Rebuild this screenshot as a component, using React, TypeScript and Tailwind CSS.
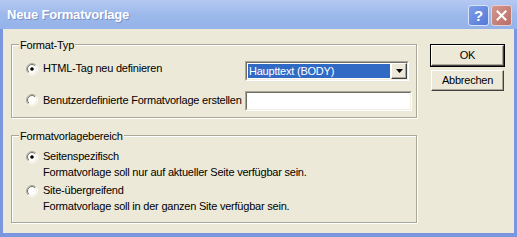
import React from "react";

function Radio({ checked }: { checked?: boolean }) {
  return (
    <svg width="12" height="12" viewBox="0 0 12 12" className="shrink-0">
      <defs>
        <linearGradient id="ro" x1="0" y1="0" x2="1" y2="1">
          <stop offset="0.45" stopColor="#aca899" />
          <stop offset="0.55" stopColor="#ffffff" />
        </linearGradient>
        <linearGradient id="ri" x1="0" y1="0" x2="1" y2="1">
          <stop offset="0.45" stopColor="#716f64" />
          <stop offset="0.55" stopColor="#f1efe2" />
        </linearGradient>
      </defs>
      <circle cx="6" cy="6" r="5.5" fill="none" stroke="url(#ro)" strokeWidth="1" />
      <circle cx="6" cy="6" r="4.5" fill="#ffffff" stroke="url(#ri)" strokeWidth="1" />
      {checked && <circle cx="6" cy="6" r="1.8" fill="#000000" />}
    </svg>
  );
}

function GroupBox({
  label,
  className,
  children,
}: {
  label: string;
  className?: string;
  children: React.ReactNode;
}) {
  return (
    <div
      className={
        "relative border border-[#aca899] shadow-[inset_1px_1px_0_#ffffff,1px_1px_0_#ffffff] " +
        (className ?? "")
      }
    >
      <span className="absolute left-[7px] top-[-6px] bg-[#ece9d8] px-[1px] leading-[13px] whitespace-nowrap">
        {label}
      </span>
      {children}
    </div>
  );
}

function Sunken({ className, children }: { className?: string; children?: React.ReactNode }) {
  return (
    <div
      className={
        "shrink-0 border border-t-[#aca899] border-l-[#aca899] border-b-[#ffffff] border-r-[#ffffff] " +
        (className ?? "")
      }
    >
      <div className="h-full w-full border border-t-[#716f64] border-l-[#716f64] border-b-[#f1efe2] border-r-[#f1efe2] bg-white">
        {children}
      </div>
    </div>
  );
}

function Button({ label, isDefault }: { label: string; isDefault?: boolean }) {
  return (
    <div
      className={
        "h-[23px] w-[75px] " + (isDefault ? "border border-black" : "border border-transparent")
      }
    >
      <div className="flex h-full w-full items-center justify-center border border-t-white border-l-white border-b-[#404040] border-r-[#404040] bg-[#ece9d8] shadow-[inset_-1px_-1px_0_#aca899]">
        <span className="leading-[13px]">{label}</span>
      </div>
    </div>
  );
}

export default function App() {
  return (
    <div
      className="flex h-[237px] w-[517px] flex-col bg-[#7a96df] text-[11px] tracking-[-0.22px] text-black"
      style={{ fontFamily: '"Liberation Sans", Arial, sans-serif' }}
    >
      {/* Title bar */}
      <div className="flex h-[29px] items-start bg-gradient-to-b from-[#b4c9f2] via-[#9db9eb] to-[#95b2ea] pl-[7px] pr-[5px]">
        <span className="mt-[7px] text-[13px] font-bold leading-[15px] tracking-[-0.2px] text-white [text-shadow:1px_1px_0_#7b8fc8]">
          Neue Formatvorlage
        </span>
        <div className="ml-auto mt-[5px] flex gap-[2px]">
          <div className="flex h-[21px] w-[21px] items-center justify-center rounded-[3px] border border-[#d8e2f8] bg-gradient-to-br from-[#7d9fe8] to-[#5578d8]">
            <span className="text-[15px] font-bold leading-[15px] tracking-normal text-white">?</span>
          </div>
          <div className="flex h-[21px] w-[21px] items-center justify-center rounded-[3px] border border-[#e8d0d0] bg-gradient-to-br from-[#d4968e] to-[#b86e66]">
            <svg width="11" height="11" viewBox="0 0 11 11">
              <path d="M1.5 1.5 L9.5 9.5 M9.5 1.5 L1.5 9.5" stroke="#ffffff" strokeWidth="2" strokeLinecap="square" />
            </svg>
          </div>
        </div>
      </div>

      {/* Client */}
      <div className="mx-[3px] mb-[4px] flex flex-1 bg-[#ece9d8] pl-[8px] pt-[15px]">
        <div className="flex w-[406px] shrink-0 flex-col gap-[17px]">
          <GroupBox label="Format-Typ" className="h-[74px]">
            <div className="flex flex-col gap-[10px] pt-[16px]">
              <div className="flex h-[20px] items-start">
                <div className="ml-[14px] mt-[1px] flex items-start gap-[5px] whitespace-nowrap">
                  <div className="mt-[1px]">
                    <Radio checked />
                  </div>
                  <span className="leading-[13px]">HTML-Tag neu definieren</span>
                </div>
                <Sunken className="ml-auto mr-[7px] h-[20px] w-[164px]">
                  <div className="flex h-full items-stretch">
                    <div className="m-[1px] flex flex-1 items-center bg-[#316ac5] pl-[1px] text-white">
                      <span className="leading-[13px]">Haupttext (BODY)</span>
                    </div>
                    <div className="flex w-[16px] items-center justify-center border border-t-white border-l-white border-b-[#404040] border-r-[#404040] bg-[#ece9d8] shadow-[inset_-1px_-1px_0_#aca899]">
                      <svg width="7" height="4" viewBox="0 0 7 4">
                        <path d="M0 0 H7 L3.5 4 Z" fill="#000000" />
                      </svg>
                    </div>
                  </div>
                </Sunken>
              </div>
              <div className="flex h-[20px] items-start">
                <div className="ml-[14px] mt-[3px] flex items-start gap-[5px] whitespace-nowrap">
                  <Radio />
                  <span className="leading-[13px]">Benutzerdefinierte Formatvorlage erstellen</span>
                </div>
                <Sunken className="ml-auto mr-[4px] h-[20px] w-[167px]" />
              </div>
            </div>
          </GroupBox>

          <GroupBox label="Formatvorlagebereich" className="h-[88px]">
            <div className="flex flex-col pl-[14px] pt-[14px] whitespace-nowrap">
              <div className="flex items-center gap-[5px]">
                <Radio checked />
                <span className="leading-[13px]">Seitenspezifisch</span>
              </div>
              <span className="ml-[17px] mt-[3px] leading-[13px]">
                Formatvorlage soll nur auf aktueller Seite verfügbar sein.
              </span>
              <div className="mt-[5px] flex items-center gap-[5px]">
                <Radio />
                <span className="leading-[13px]">Site-übergreifend</span>
              </div>
              <span className="ml-[17px] mt-[3px] leading-[13px]">
                Formatvorlage soll in der ganzen Site verfügbar sein.
              </span>
            </div>
          </GroupBox>
        </div>

        <div className="ml-[13px] flex flex-col gap-[2px]">
          <Button label="OK" isDefault />
          <Button label="Abbrechen" />
        </div>
      </div>
    </div>
  );
}
